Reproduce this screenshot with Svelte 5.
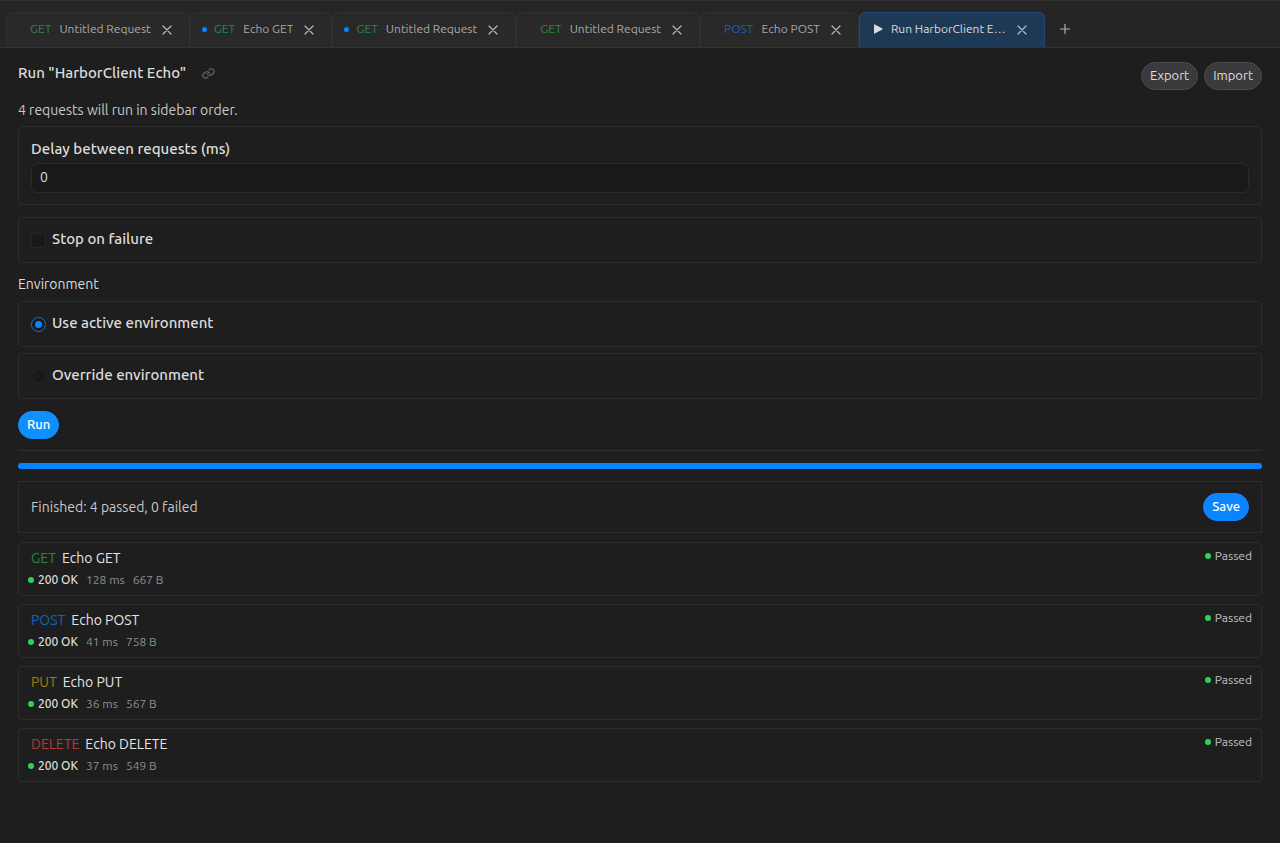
<script lang="ts">
	type Tab = {
		id: number;
		method?: string;
		name: string;
		unsaved?: boolean;
	};

	type Result = {
		method: string;
		name: string;
		status: string;
		time: string;
		size: string;
	};

	let tabs = $state<Tab[]>([
		{ id: 1, method: 'GET', name: 'Untitled Request' },
		{ id: 2, method: 'GET', name: 'Echo GET', unsaved: true },
		{ id: 3, method: 'GET', name: 'Untitled Request', unsaved: true },
		{ id: 4, method: 'GET', name: 'Untitled Request' },
		{ id: 5, method: 'POST', name: 'Echo POST' },
		{ id: 6, name: 'Run HarborClient E…' }
	]);
	let activeTab = $state(6);
	let nextId = 7;

	let delay = $state('0');
	let stopOnFailure = $state(false);
	let environment = $state('active');

	const results: Result[] = [
		{ method: 'GET', name: 'Echo GET', status: '200 OK', time: '128 ms', size: '667 B' },
		{ method: 'POST', name: 'Echo POST', status: '200 OK', time: '41 ms', size: '758 B' },
		{ method: 'PUT', name: 'Echo PUT', status: '200 OK', time: '36 ms', size: '567 B' },
		{ method: 'DELETE', name: 'Echo DELETE', status: '200 OK', time: '37 ms', size: '549 B' }
	];

	const addTab = () => {
		tabs.push({ id: nextId, method: 'GET', name: 'Untitled Request' });
		activeTab = nextId;
		nextId += 1;
	};

	const closeTab = (id: number) => {
		tabs = tabs.filter((tab) => tab.id !== id);
	};
</script>

<div class="app">
	<nav class="tab-bar" aria-label="Open tabs">
		{#each tabs as tab (tab.id)}
			<div class="tab" class:active={tab.id === activeTab}>
				<button class="tab-open" onclick={() => (activeTab = tab.id)}>
					{#if tab.method}
						<span class="unsaved" class:visible={tab.unsaved}></span>
						<span class="method {tab.method.toLowerCase()}">{tab.method}</span>
					{:else}
						<svg class="play" viewBox="0 0 10 10" aria-hidden="true">
							<path d="M1 .8v8.4q0 .8.8.4l7.6-4.2q.6-.4 0-.8L1.8.4Q1 0 1 .8z" fill="currentColor" />
						</svg>
					{/if}
					<span class="tab-name">{tab.name}</span>
				</button>
				<button class="close" aria-label="Close {tab.name}" onclick={() => closeTab(tab.id)}>
					<svg viewBox="0 0 10 10" aria-hidden="true">
						<path d="M1 1l8 8M9 1L1 9" />
					</svg>
				</button>
			</div>
		{/each}
		<button class="add" aria-label="New tab" onclick={addTab}>
			<svg viewBox="0 0 10 10" aria-hidden="true">
				<path d="M5 .5v9M.5 5h9" />
			</svg>
		</button>
	</nav>

	<main>
		<header>
			<div class="title">
				<h1>Run "HarborClient Echo"</h1>
				<button class="link" aria-label="Copy link">
					<svg viewBox="0 0 24 24" aria-hidden="true">
						<g transform="rotate(12 12 12)">
							<path d="M10 13a5 5 0 0 0 7.5.5l3-3a5 5 0 0 0-7-7l-1.8 1.7" />
							<path d="M14 11a5 5 0 0 0-7.5-.5l-3 3a5 5 0 0 0 7 7l1.8-1.7" />
						</g>
					</svg>
				</button>
			</div>
			<div class="actions">
				<button class="pill">Export</button>
				<button class="pill">Import</button>
			</div>
		</header>

		<p class="summary">4 requests will run in sidebar order.</p>

		<div class="card delay">
			<label for="delay">Delay between requests (ms)</label>
			<input id="delay" type="text" inputmode="numeric" bind:value={delay} />
		</div>

		<label class="card option">
			<input type="checkbox" bind:checked={stopOnFailure} />
			<span>Stop on failure</span>
		</label>

		<fieldset>
			<legend>Environment</legend>
			<label class="card option">
				<input type="radio" name="environment" value="active" bind:group={environment} />
				<span>Use active environment</span>
			</label>
			<label class="card option">
				<input type="radio" name="environment" value="override" bind:group={environment} />
				<span>Override environment</span>
			</label>
		</fieldset>

		<button class="pill primary run">Run</button>

		<section>
			<div class="progress" role="progressbar" aria-label="Run progress" aria-valuenow="100">
				<div class="bar" style="width: {(results.length / 4) * 100}%"></div>
			</div>

			<div class="finished">
				<span>Finished: 4 passed, 0 failed</span>
				<button class="pill primary">Save</button>
			</div>

			<ul>
				{#each results as result}
					<li class="card result">
						<div>
							<div class="request">
								<span class="method {result.method.toLowerCase()}">{result.method}</span>
								<span class="request-name">{result.name}</span>
							</div>
							<div class="response">
								<span class="dot"></span>
								<span class="status">{result.status}</span>
								<span>{result.time}</span>
								<span>{result.size}</span>
							</div>
						</div>
						<div class="outcome">
							<span class="dot"></span>
							<span>Passed</span>
						</div>
					</li>
				{/each}
			</ul>
		</section>
	</main>
</div>

<style>
	:global(body) {
		background: #1e1e1e;
	}
	.app {
		min-height: 100vh;
		background: #1e1e1e;
		color: #dcdcdc;
		font-family: Ubuntu, 'Noto Sans', 'Open Sans', sans-serif;
		font-size: 14px;
		line-height: 20px;
	}
	button,
	input {
		font: inherit;
		color: inherit;
		box-sizing: border-box;
	}
	button {
		margin: 0;
		padding: 0;
		border: none;
		background: none;
	}
	svg {
		display: block;
		fill: none;
		stroke: currentColor;
		stroke-linecap: round;
	}

	.tab-bar {
		display: flex;
		align-items: flex-end;
		box-sizing: border-box;
		height: 48px;
		padding: 0 6px;
		background: #252525;
		border-top: 1px solid #303030;
		border-bottom: 1px solid #333;
	}
	.tab {
		display: flex;
		align-items: center;
		box-sizing: border-box;
		height: 35px;
		padding: 0 12px 0 11px;
		gap: 6px;
		background: #292929;
		border: 1px solid #303030;
		border-bottom: none;
		border-radius: 6px 6px 0 0;
		color: #a8a8a8;
		font-size: 12px;
	}
	.tab.active {
		background: #1e3956;
		border-color: #234a72;
		color: #dcdcdc;
	}
	.tab-open {
		display: flex;
		align-items: center;
		padding-bottom: 2px;
	}
	.unsaved {
		width: 5px;
		height: 5px;
		margin-right: 7px;
		border-radius: 50%;
	}
	.unsaved.visible {
		background: #0a84ff;
	}
	.tab-name {
		max-width: 120px;
		margin-left: 8px;
		overflow: hidden;
		text-overflow: ellipsis;
		white-space: nowrap;
	}
	.play {
		width: 10px;
		height: 10px;
		margin-left: 2px;
		stroke: none;
	}
	.close {
		display: grid;
		place-items: center;
		width: 20px;
		height: 20px;
		color: #b8b8b8;
	}
	.close svg {
		width: 10px;
		height: 10px;
		stroke-width: 1.2;
	}
	.add {
		display: grid;
		place-items: center;
		width: 40px;
		height: 35px;
		padding-bottom: 2px;
		color: #b0b0b0;
	}
	.add svg {
		width: 10px;
		height: 10px;
		stroke-width: 1.2;
	}

	.method.get {
		color: #2d8549;
	}
	.method.post {
		color: #0f62be;
	}
	.method.put {
		color: #ac780c;
	}
	.method.delete {
		color: #be372d;
	}

	main {
		padding: 14px 18px 24px;
	}
	header {
		display: flex;
		justify-content: space-between;
		align-items: flex-start;
		height: 38px;
	}
	.title {
		display: flex;
		align-items: center;
		gap: 16px;
	}
	h1 {
		margin: 0;
		font-size: 15px;
		font-weight: 500;
		line-height: 22px;
	}
	.link {
		color: #606060;
	}
	.link svg {
		width: 13px;
		height: 13px;
		stroke-width: 2.4;
	}
	.actions {
		display: flex;
		gap: 6px;
	}
	.pill {
		height: 28px;
		padding: 0 8px 2px;
		border: 1px solid #4a4a4c;
		border-radius: 14px;
		background: #3a3a3c;
		font-size: 13px;
	}
	.pill.primary {
		border-color: #0a84ff;
		background: #0a84ff;
		color: #fff;
		font-weight: 500;
	}
	.pill.run {
		display: block;
		border-color: #0f90ff;
		background: #0f90ff;
	}
	.summary {
		margin: 0 0 6px;
		color: #c8c8c8;
	}

	.card {
		box-sizing: border-box;
		border: 1px solid #2c2c2c;
		border-radius: 4px;
	}
	.delay {
		display: flex;
		flex-direction: column;
		margin-bottom: 12px;
		padding: 12px 12px 11px;
		gap: 4px;
		font-size: 15px;
		font-weight: 500;
	}
	.delay input {
		height: 30px;
		padding: 0 8px 2px;
		border: 1px solid #2a2a2a;
		border-radius: 6px;
		background: #191919;
		font-size: 14px;
		font-weight: 400;
	}
	.option {
		display: flex;
		align-items: center;
		height: 46px;
		padding: 0 12px;
		gap: 6px;
		font-size: 15px;
		font-weight: 500;
	}
	.option span {
		padding-bottom: 2px;
	}
	.option input {
		appearance: none;
		display: grid;
		place-items: center;
		width: 15px;
		height: 15px;
		margin: 0;
		border: 1px solid #262626;
		border-radius: 3px;
		background: #191919;
	}
	.option input[type='radio'] {
		border-radius: 50%;
	}
	.option input:checked {
		border-color: #0a78e6;
	}
	.option input:checked::before {
		content: '';
		width: 7px;
		height: 7px;
		border-radius: inherit;
		background: #0a84ff;
	}
	fieldset {
		display: flex;
		flex-direction: column;
		gap: 6px;
		min-width: 0;
		margin: 11px 0 12px;
		padding: 0;
		border: none;
	}
	legend {
		margin-bottom: 7px;
		padding: 0;
	}

	section {
		margin-top: 11px;
		padding-top: 12px;
		border-top: 1px solid #303030;
	}
	.progress {
		height: 6px;
		border-radius: 3px;
		background: #2c2c2c;
	}
	.bar {
		height: 100%;
		border-radius: 3px;
		background: #0a84ff;
	}
	.finished {
		display: flex;
		align-items: center;
		justify-content: space-between;
		box-sizing: border-box;
		height: 52px;
		margin: 12px 0 9px;
		padding: 0 12px;
		border: 1px solid #2c2c2c;
		color: #c8c8c8;
	}
	ul {
		display: flex;
		flex-direction: column;
		gap: 8px;
		margin: 0;
		padding: 0;
		list-style: none;
	}
	.result {
		display: flex;
		justify-content: space-between;
		height: 54px;
		padding: 4px 9px;
	}
	.request {
		display: flex;
		gap: 6px;
		padding-left: 3px;
		line-height: 22px;
	}
	.request-name {
		color: #e4e4e4;
	}
	.response {
		display: flex;
		align-items: center;
		gap: 8px;
		color: #909090;
		font-size: 12px;
		line-height: 22px;
	}
	.response .dot {
		margin-right: -4px;
	}
	.status {
		color: #dcdcdc;
		font-weight: 500;
	}
	.outcome {
		display: flex;
		align-items: center;
		gap: 4px;
		height: 18px;
		color: #c0c0c0;
		font-size: 12px;
	}
	.dot {
		width: 6px;
		height: 6px;
		border-radius: 50%;
		background: #30d158;
	}
</style>
